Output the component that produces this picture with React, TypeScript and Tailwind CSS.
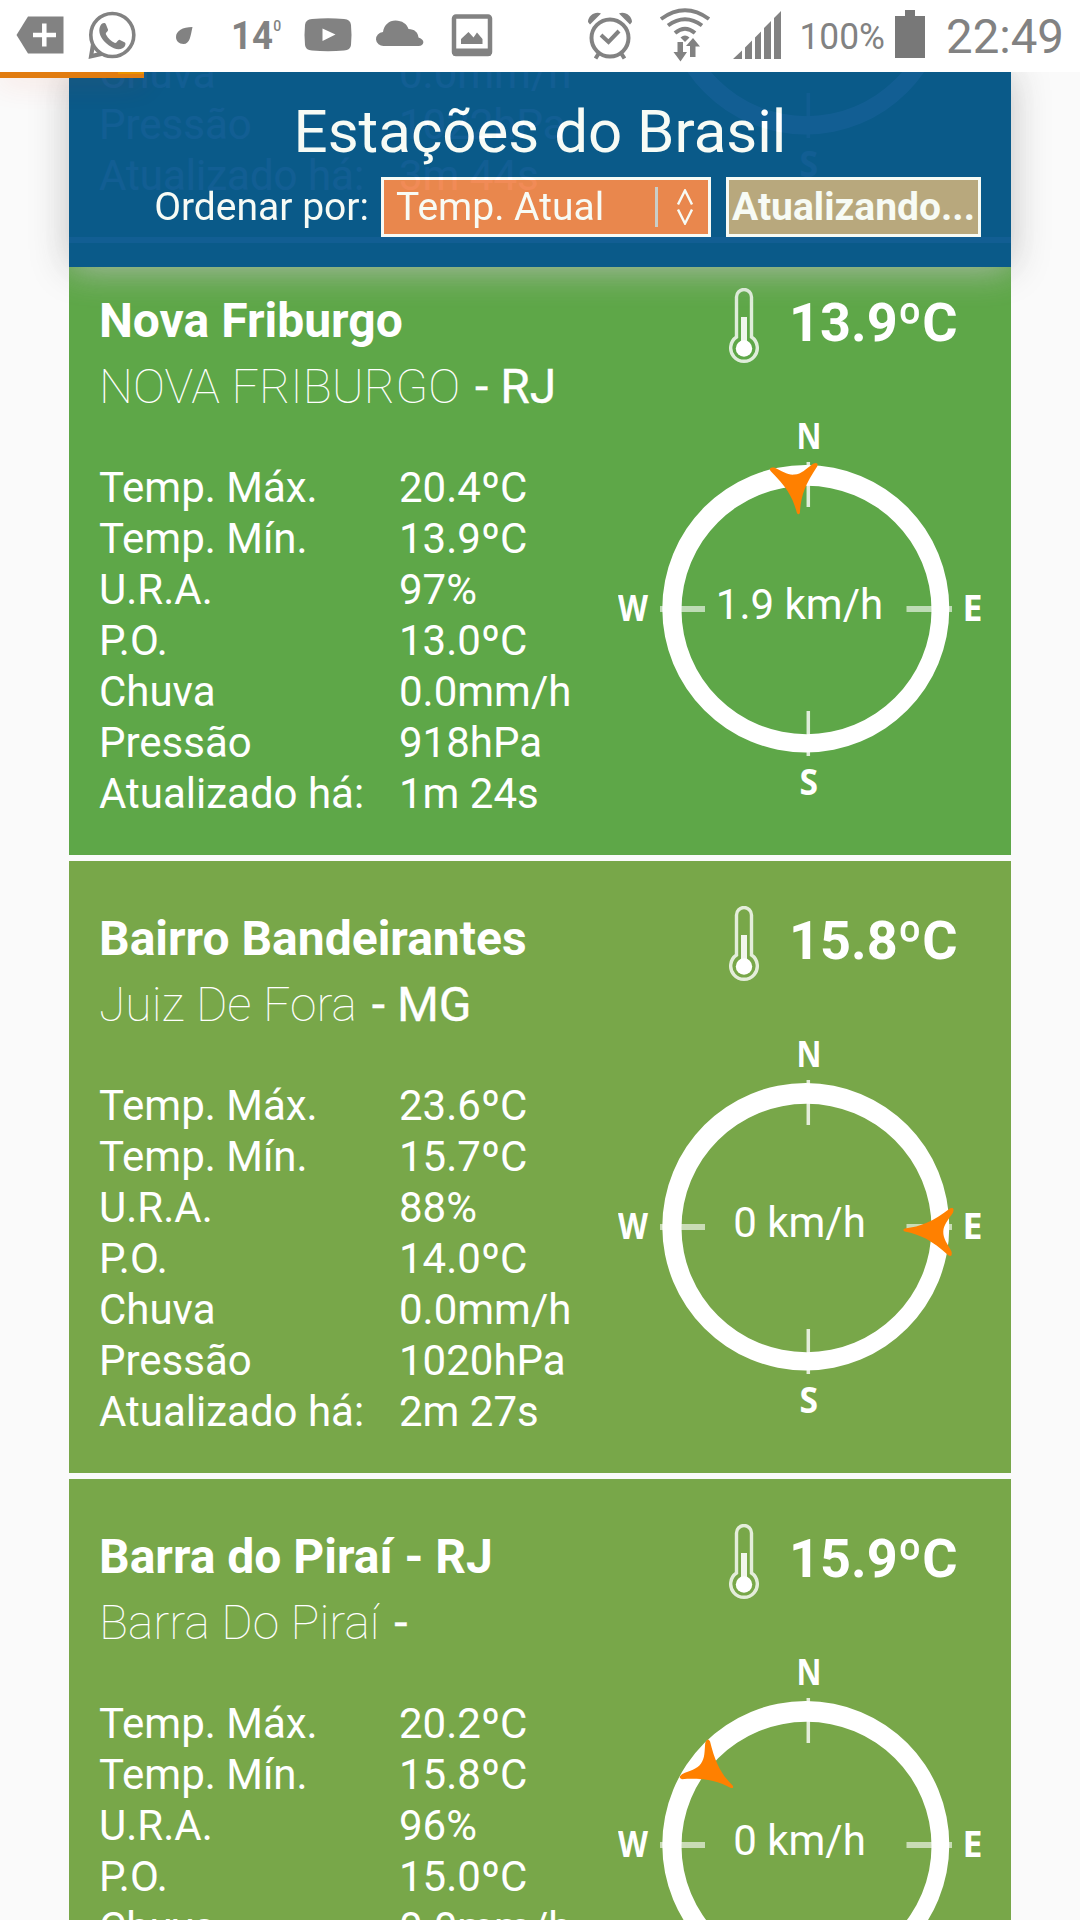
import React from "react";

type Station = {
  name: string;
  city: string;
  state: string;
  temp: string;
  color: string;
  speed: string;
  arrow: { x: number; y: number; angle: number };
  rows: [string, string][];
};

const LABELS = ["Temp. Máx.", "Temp. Mín.", "U.R.A.", "P.O.", "Chuva", "Pressão", "Atualizado há:"];

const rowsOf = (...values: string[]): [string, string][] => values.map((v, i) => [LABELS[i], v]);

const STATIONS: Station[] = [
  {
    name: "Nova Friburgo",
    city: "NOVA FRIBURGO",
    state: "RJ",
    temp: "13.9ºC",
    color: "bg-[#5ea748]",
    speed: "1.9 km/h",
    arrow: { x: 178, y: 66, angle: -5.8 },
    rows: rowsOf("20.4ºC", "13.9ºC", "97%", "13.0ºC", "0.0mm/h", "918hPa", "1m 24s"),
  },
  {
    name: "Bairro Bandeirantes",
    city: "Juiz De Fora",
    state: "MG",
    temp: "15.8ºC",
    color: "bg-[#78a749]",
    speed: "0 km/h",
    arrow: { x: 310.8, y: 190, angle: 92.3 },
    rows: rowsOf("23.6ºC", "15.7ºC", "88%", "14.0ºC", "0.0mm/h", "1020hPa", "2m 27s"),
  },
  {
    name: "Barra do Piraí - RJ",
    city: "Barra Do Piraí",
    state: "",
    temp: "15.9ºC",
    color: "bg-[#78a749]",
    speed: "0 km/h",
    arrow: { x: 94.5, y: 113.5, angle: -53.4 },
    rows: rowsOf("20.2ºC", "15.8ºC", "96%", "15.0ºC", "0.0mm/h"),
  },
];

// Tail of the card that is scrolled beneath the header.
const SCROLLED_ROWS: [string, string][] = [
  ["Chuva", "0.0mm/h"],
  ["Pressão", "1022hPa"],
  ["Atualizado há:", "3m 44s"],
];

function Thermometer() {
  return (
    <svg width="30" height="75" viewBox="0 0 30 75" fill="none">
      <path
        d="M7.500 49V9a7.500 7.500 0 0 1 15 0V49a13.300 13.300 0 1 1-15 0Z"
        stroke="white"
        strokeOpacity=".8"
        strokeWidth="3.4"
      />
      <path d="M15 29v31" stroke="white" strokeOpacity=".9" strokeWidth="6" />
      <circle cx="15" cy="60.5" r="8.2" fill="white" />
    </svg>
  );
}

function Compass({ arrow }: { arrow?: Station["arrow"] }) {
  return (
    <svg width="363" height="372" viewBox="0 0 363 372" className="block" fontFamily="Open Sans" fontWeight="700" fill="white">
      <path
        fillRule="evenodd"
        d="M44.3 185.7a143.5 143.7 0 1 0 287 0a143.5 143.7 0 1 0-287 0ZM63.5 187a125 124.2 0 1 0 250 0a125 124.2 0 1 0-250 0Z"
      />
      <path d="M190.3 39v45M190.3 288v45" stroke="white" strokeOpacity=".8" strokeWidth="3.5" />
      <path d="M42 186h45M288.5 186H334" stroke="white" strokeOpacity=".6" strokeWidth="6" />
      <text x="178.5" y="26" fontSize="36" textLength="25" lengthAdjust="spacingAndGlyphs">N</text>
      <text x="0" y="198" fontSize="36" textLength="30" lengthAdjust="spacingAndGlyphs">W</text>
      <text x="344.5" y="198" fontSize="36" textLength="20" lengthAdjust="spacingAndGlyphs">E</text>
      <text x="181.5" y="371.5" fontSize="35" textLength="18.5" lengthAdjust="spacingAndGlyphs">S</text>
      {arrow && (
        <path
          transform={`translate(${arrow.x} ${arrow.y}) rotate(${arrow.angle})`}
          d="M-1.500 24C-4 8-9-3-23.500-20.500q-2-4.500 4-3C-12-19-7-14.500 0-14.500C7-14.500 12-19 19.500-23.500q6-1.500 4 3C9-3 4 8 1.500 24Q0 27-1.500 24Z"
          fill="#ff8000"
        />
      )}
    </svg>
  );
}

function Rows({ rows }: { rows: [string, string][] }) {
  return (
    <dl className="grid grid-cols-[300px_1fr] text-[42px] leading-[51px]">
      {rows.map(([label, value]) => (
        <React.Fragment key={label}>
          <dt className="whitespace-nowrap">{label}</dt>
          <dd className="whitespace-nowrap">{value}</dd>
        </React.Fragment>
      ))}
    </dl>
  );
}

function StationCard({ station }: { station: Station }) {
  return (
    <article className={`flex h-[612px] shrink-0 justify-between px-[30px] text-white ${station.color}`}>
      <div className="w-[500px] pt-[45px]">
        <h2 className="whitespace-nowrap text-[48px] font-bold leading-[66px]">{station.name}</h2>
        <p className="whitespace-nowrap text-[48px] leading-[66px]">
          <span className="font-thin">{station.city}</span>{" "}
          <span className="ml-[3px] [-webkit-text-stroke:0.3px_white]">- {station.state}</span>
        </p>
        <div className="mt-[42px]">
          <Rows rows={station.rows} />
        </div>
      </div>
      <div className="w-[363px] pt-[45px]">
        <div className="flex h-[135px] items-start pl-[111px]">
          <Thermometer />
          <span className="ml-[30px] mt-[3px] whitespace-nowrap text-[54px] font-bold leading-[64px]">{station.temp}</span>
        </div>
        <div className="relative">
          <Compass arrow={station.arrow} />
          <span className="absolute inset-x-0 top-[156px] text-center text-[42px] leading-[51px]">{station.speed}</span>
        </div>
      </div>
    </article>
  );
}

function ScrolledCard() {
  return (
    <article className="flex h-[165px] shrink-0 items-end justify-between overflow-hidden bg-[#5ea748] px-[30px] text-white">
      <div className="w-[500px] pb-[36px]">
        <Rows rows={SCROLLED_ROWS} />
      </div>
      <div className="w-[363px] pb-[60px]">
        <Compass />
      </div>
    </article>
  );
}

function StatusBar() {
  return (
    <div className="relative z-30 h-[72px] w-full bg-white text-[#828282]">
      <svg width="1080" height="72" viewBox="0 0 1080 72" fill="#828282" fontFamily="Roboto">
        <path d="M16.5 35 28 16.500H63.500V53.500H28Z" />
        <path d="M33 35h23M44.300 23.500v23" stroke="white" strokeWidth="4.500" />
        <circle cx="112.300" cy="35" r="21.500" fill="none" stroke="#828282" strokeWidth="3.600" />
        <path d="M91 44 88.500 59 104 55.500 101 51.500 93.500 53.500 95 47Z" />
        <path d="M101.500 26.500c2-3 4.500-3 5.500-1l2 5c.5 2-3 3-2 5 2 4 5 6.500 9 8.500 2 .5 3-4 5-3l5 2.500c1 1 .5 4-2 5.500-4 2.500-9 1-14-2.500-5-3.500-9-9-9.500-13-.5-3 0-5 1-7Z" transform="translate(-1 -1)" />
        <path d="M192.500 27c-10 0-16.500 4-16.500 10 0 4 3 7 7.500 7 6.500 0 7-8 9-17Z" />
        <text x="231" y="49" fontSize="39" fontWeight="700" textLength="42" lengthAdjust="spacingAndGlyphs">14</text>
        <text x="273.300" y="31" fontSize="14" fontWeight="500">0</text>
        <path d="M312 19q16-1.500 32 0 6.500.5 7 6 1 10 0 20-.5 5-7 5.500-16 1.500-32 0-6.500-.5-7-5.500-1-10 0-20 .5-5.500 7-6Z" />
        <path d="m322.500 28.500 13 6-13 6.500Z" fill="white" />
        <path d="M384 46a7.500 7 0 0 1-1-14c1-7 6-11.500 12.500-11.500S407 24 408.500 29c6 0 9.500 3.500 10 8.500 7 2 6 8.500 0 8.500Z" />
        <rect x="454" y="16.500" width="36" height="37.500" rx="2" fill="none" stroke="#828282" strokeWidth="4.500" />
        <path d="M453 48.500h38v7h-38zM461 44v-5l7.500-7 5 5.500 3.500-5 5.500 6.500v5Z" />

        <circle cx="610" cy="38" r="18.500" fill="none" stroke="#828282" strokeWidth="4" />
        <path d="m601 35 7.500 7L619 31" fill="none" stroke="#828282" strokeWidth="4" />
        <path d="M588 22c0-6 7-11 13-8.500L590 24.500ZM632 22c0-6-7-11-13-8.500L630 24.500Z" />
        <path d="m599 53-3.500 5.500M621 53l3.500 5.500" stroke="#828282" strokeWidth="4" />
        <g fill="none" stroke="#828282" strokeWidth="4">
          <path d="M661 19q24-17.500 48 0" />
          <path d="M668 25.500q17-12.500 34 0" />
          <path d="M675 33q10-8.500 20 0" />
        </g>
        <path d="M680.500 37.500q4.500-4 9 0l-4.500 4.500Z" />
        <path d="M677.500 42h5.500v10h4l-6.500 9.500L673.500 52h4ZM690 57V46h-4l7-8 7 8.500h-4.500V57Z" />
        <path d="M733 59 742 50.500V59ZM745 47.500l7-7V59h-7ZM755 37.500l6-6V59h-6ZM764 28l7-7V59h-7ZM774 18l7-7V59h-7Z" />
        <text x="799.500" y="49" fontSize="36" textLength="85.500" lengthAdjust="spacingAndGlyphs">100%</text>
        <path d="M905 10h10v6h10v42h-30V16h10Z" fill="#787878" />
        <text x="946" y="53" fontSize="48" textLength="118" lengthAdjust="spacingAndGlyphs">22:49</text>
      </svg>
    </div>
  );
}

function Header() {
  return (
    <header className="absolute inset-x-[69px] top-[72px] z-10 h-[195px] bg-[#06568e] pt-[24px] text-white opacity-95 shadow-[0_0_36px_#bdbdbd]">
      <h1 className="text-center text-[60px] leading-[72px]">Estações do Brasil</h1>
      <div className="mt-[9px] flex items-center justify-end pr-[30px] text-[39px] leading-[54px]">
        <label className="mr-[12px] whitespace-nowrap">Ordenar por:</label>
        <div className="flex h-[60px] w-[330px] items-center border-[3px] border-white bg-[#f1854f] pl-[12px]">
          <span className="flex-1 whitespace-nowrap">Temp. Atual</span>
          <span className="h-[40px] w-[3px] bg-[#d0d0d0]" />
          <svg width="16" height="36" viewBox="0 0 16 36" fill="none" stroke="white" strokeWidth="2.4" className="ml-[19px] mr-[15px]">
            <path d="M1 15.500 8 1.500l7 14M1 20.500l7 14 7-14" />
          </svg>
        </div>
        <button className="ml-[15px] h-[60px] w-[255px] whitespace-nowrap border-[3px] border-white bg-[#bda881] font-bold">
          Atualizando...
        </button>
      </div>
    </header>
  );
}

export default function App() {
  return (
    <div className="relative flex h-[1920px] w-[1080px] flex-col overflow-hidden bg-[#fafafa] font-['Roboto',sans-serif]">
      <StatusBar />
      <div className="absolute left-0 top-[72px] z-20 h-[6px] w-[144px] bg-[#e17c10] shadow-[0_0_30px_rgba(230,50,10,0.3)]">
        <div className="ml-auto h-[2px] w-[26px] bg-[#ea9300]" />
      </div>
      <Header />
      <main className="mx-[69px] flex flex-col gap-[6px]">
        <ScrolledCard />
        {STATIONS.map((s) => (
          <StationCard key={s.name} station={s} />
        ))}
      </main>
    </div>
  );
}
